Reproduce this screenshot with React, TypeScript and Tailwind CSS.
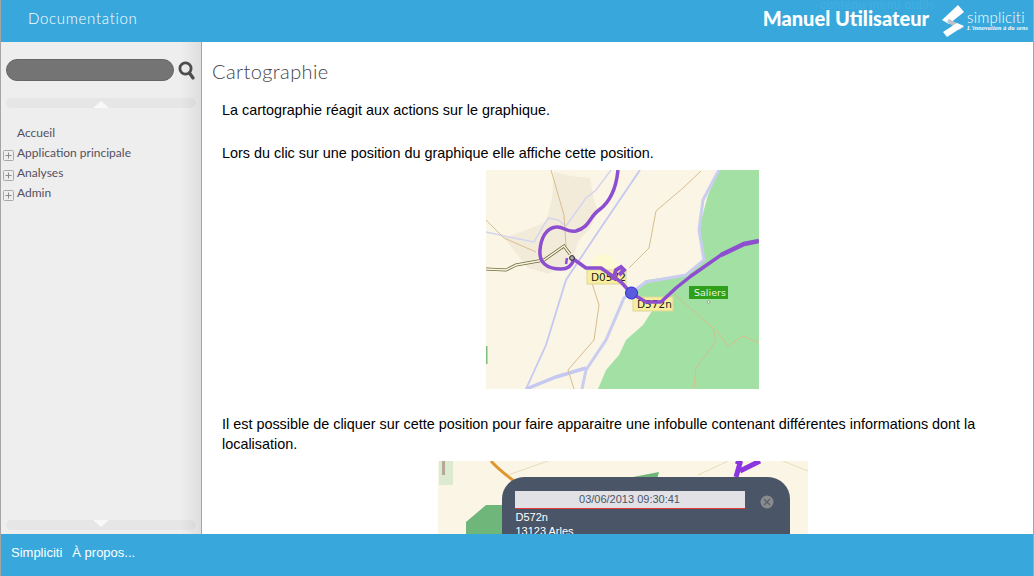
const GREEN = "#a3e0a3";

function PlusBox() {
  return (
    <svg width="11" height="11" viewBox="0 0 11 11" className="shrink-0">
      <rect x="0.5" y="0.5" width="10" height="10" rx="1" fill="#eeeeee" stroke="#a8a8a8" />
      <path d="M2.5 5.5h6M5.5 2.5v6" stroke="#8a8a8a" fill="none" />
    </svg>
  );
}

function TreeItem({ label, expandable }: { label: string; expandable?: boolean }) {
  return (
    <div className="h-5 flex items-center">
      <div className="w-[15px] pl-[1px] pt-[5px] shrink-0">{expandable && <PlusBox />}</div>
      <span className="font-['Lato'] text-[12px] text-[#555060]">{label}</span>
    </div>
  );
}

function ScrollBand({ down }: { down?: boolean }) {
  return (
    <div className="h-[10px] rounded-full bg-black/[0.03] flex justify-center">
      {down ? (
        <div className="w-0 h-0 border-x-[8px] border-x-transparent border-t-[7px] border-t-[#f8f8f8]" />
      ) : (
        <div className="mt-[3px] w-0 h-0 border-x-[8px] border-x-transparent border-b-[7px] border-b-[#f8f8f8]" />
      )}
    </div>
  );
}

function Sidebar() {
  return (
    <aside className="w-[201px] shrink-0 flex flex-col border-r border-[#a5a5a5] bg-gradient-to-r from-[#eeeeee] from-[90%] to-[#dedede] pl-[5px] pr-[5px]">
      <div className="mt-[17px] flex items-center gap-[4px]">
        <div className="w-[168px] h-[22px] rounded-full bg-[#747474] border border-[#666666]" />
        <svg width="17" height="19" viewBox="0 0 17 19">
          <circle cx="7.5" cy="7.5" r="5.6" fill="none" stroke="#4d4d4d" strokeWidth="2.8" />
          <path d="M11.5 12 L15 17" stroke="#4d4d4d" strokeWidth="3.2" strokeLinecap="round" />
        </svg>
      </div>
      <div className="mt-[17px]">
        <ScrollBand />
      </div>
      <div className="mt-[15px] -ml-[4px] flex-1">
        <TreeItem label="Accueil" />
        <TreeItem label="Application principale" expandable />
        <TreeItem label="Analyses" expandable />
        <TreeItem label="Admin" expandable />
      </div>
      <div className="mb-[4px]">
        <ScrollBand down />
      </div>
    </aside>
  );
}

function FirstMap() {
  return (
    <svg width="273" height="219" viewBox="0 0 273 219" className="block">
      <rect width="273" height="219" fill="#fbf5e6" />
      {/* town */}
      <path d="M68 2 L85 6 L104 8 L108 30 L112 42 L104 58 L92 72 L86 92 L62 104 L42 98 L18 68 L35 62 L60 52 L66 28Z" fill="#f3ebda" />
      {/* forest */}
      <path d="M233 0 L222 25 L213 58 L217 91 L200 105 L160 110 L148 120 L166 141 L157 155 L140 170 L133 185 L120 200 L112 219 L273 219 L273 0Z" fill={GREEN} />
      <rect x="0" y="176" width="1.5" height="18" fill="#7dbd7d" />
      {/* rivers */}
      <path d="M0 62 L28 68 L48 72 L62 48 L72 50 L80 56 L100 28 L110 20 L125 0" fill="none" stroke="#d3d5ee" strokeWidth="1.5" />
      <path d="M154 0 L112 62 L80 110 L60 175 L40 219" fill="none" stroke="#c5c8f1" strokeWidth="1.8" />
      <path d="M233 0 L217 30 L213 60 L218 90 L200 105 L160 112 L138 128 L120 170 L100 200 L96 219" fill="none" stroke="#c9cdf0" strokeWidth="3" />
      <path d="M100 198 L70 207 L40 219" fill="none" stroke="#c5c8f1" strokeWidth="3.5" />
      {/* tracks */}
      <path d="M65 0 L78 45 L80 76 M0 50 L18 68 L50 82 M215 1 L197 18 L170 41 L163 78 L143 98 M105 110 L113 135 L108 170 L82 200 L88 219 M187 123 L227 158 L230 171 L210 198 L208 218 M230 160 L242 176 L257 166 L273 173" fill="none" stroke="#d8bd8e" strokeWidth="1" />
      {/* road */}
      <path d="M0 99 L20 100 L30 95 L58 90 L78 76 L84 84" fill="none" stroke="#6f6a3a" strokeWidth="3" />
      <path d="M0 99 L20 100 L30 95 L58 90 L78 76 L84 84" fill="none" stroke="#fbf5e6" strokeWidth="1.4" />
      {/* route */}
      <path d="M132 0 C130 20 124 32 113 40 C103 47 104 57 90 61 C80 63 78 56 70 57 C60 58 55 68 54 80 C53 92 60 99 75 99 C82 99 85 96 88 90" fill="none" stroke="#8d4fd0" strokeWidth="3.5" />
      <path d="M81 88 L80 94" fill="none" stroke="#8d4fd0" strokeWidth="2.5" />
      {/* labels */}
      <circle cx="118" cy="97" r="13" fill="#fdfbc8" opacity="0.7" />
      <rect x="101" y="100" width="39" height="14" fill="#f8ee9e" stroke="#dcd79a" />
      <text x="105" y="111" fontFamily="DejaVu Sans" fontSize="10.5" fill="#222">D0572</text>
      <path d="M127 110 L130 100 L135 97 L138 100 L133 105" fill="none" stroke="#8d4fd0" strokeWidth="4" />
      <rect x="147" y="127" width="40" height="14" fill="#f8ee9e" stroke="#dcd79a" />
      <text x="151" y="138" fontFamily="DejaVu Sans" fontSize="10.5" fill="#222">D572n</text>
      <path d="M86 88 L100 98 L115 98 L135 112 L145 123 L160 132 L175 132 L190 118 L205 106 L235 85 L258 74" fill="none" stroke="#8d4fd0" strokeWidth="3.5" strokeLinejoin="round" />
      <path d="M235 85 L258 74 L273 71" fill="none" stroke="#8d4fd0" strokeWidth="4.5" />
      <circle cx="145.500" cy="123" r="6" fill="#5b5be0" stroke="#2b2bd0" strokeWidth="1" />
      <circle cx="86" cy="88" r="2.400" fill="#a8a8a8" stroke="#222" strokeWidth="1" />
      {/* place name */}
      <rect x="203" y="116" width="39" height="13" fill="#2ea019" />
      <text x="208" y="126" fontFamily="DejaVu Sans" fontSize="9.500" fill="#e8f5e0">Saliers</text>
      <circle cx="222.500" cy="132" r="1.300" fill="#fff" stroke="#666" strokeWidth="0.5" />
    </svg>
  );
}

function SecondMap() {
  return (
    <div className="relative w-[370px] h-[219px] mx-auto">
      <svg width="370" height="219" viewBox="0 0 370 219" className="block">
        <rect width="370" height="219" fill="#fbf5e6" />
        <rect x="1" y="0" width="14" height="24" fill="#dcebd0" />
        <rect x="4" y="0" width="3" height="14" fill="#b5a898" />
        <path d="M53 0 C60 8 68 14 76 20" fill="none" stroke="#e0962f" strokeWidth="3" />
        <path d="M70 14 L110 0 M260 14 L290 0 M345 0 L370 10" fill="none" stroke="#e8dcb8" strokeWidth="1" />
        <path d="M150 18 L195 16 L221 11 L218 22Z" fill="#6fb67a" />
        <path d="M28 61 L48 44 L66 44 L66 75 L28 75Z" fill="#6fb67a" />
        <path d="M298 16 L302 2 L298 0 M302 10 L322 0" fill="none" stroke="#8a35e0" strokeWidth="5" />
      </svg>
      <div className="absolute left-[64px] top-[16px] w-[288px] h-[120px] rounded-[22px] bg-[#4a5568]">
        <div className="absolute left-[13px] top-[14px] w-[230px] h-[18px] bg-[#e2e2e6] border-b border-b-[#e23b3b] text-center text-[11px] leading-[17px] text-[#4a5568] font-['Liberation_Sans']">
          03/06/2013 09:30:41
        </div>
        <svg width="14" height="14" viewBox="0 0 14 14" className="absolute left-[258px] top-[18px]">
          <circle cx="7" cy="7" r="6.500" fill="#8b8b8b" />
          <path d="M4 4 L10 10 M10 4 L4 10" stroke="#5a6272" strokeWidth="1.500" />
        </svg>
        <div className="absolute left-[14px] top-[33px] text-[11px] leading-[14px] text-white font-['Liberation_Sans']">
          <div>D572n</div>
          <div>13123 Arles</div>
        </div>
      </div>
    </div>
  );
}

function Logo() {
  return (
    <div className="flex items-center gap-[2px] mt-[5px]">
      <svg width="24" height="32" viewBox="0 0 24 32">
        <path d="M17 0 L1 15 L8 19 L23 7 Z" fill="#ffffff" />
        <path d="M8 14 L23 22 L18 25 L6 17Z" fill="#b9c4cc" />
        <path d="M23 21 L6 32 L2 27 L16 18Z" fill="#ffffff" />
      </svg>
      <div className="flex flex-col">
        <span className="font-['Lato'] font-light text-[15px] leading-[16px] text-white tracking-[0.2px]">simpliciti</span>
        <span className="font-['Liberation_Serif'] italic font-bold text-[6px] leading-[7px] text-white tracking-[0.2px]">L'innovation à du sens</span>
      </div>
    </div>
  );
}

export default function App() {
  return (
    <div className="w-[1034px] h-[576px] overflow-hidden flex flex-col bg-white border-x border-[#a5a5a5] font-['Liberation_Sans',sans-serif]">
      <header className="relative h-[42px] shrink-0 bg-[#38a8dc] flex items-center -mx-px pl-[28px] pr-[6px] pb-[6px]">
        <span className="font-['Lato'] font-light text-[15px] tracking-[0.7px] text-white">Documentation</span>
        <span className="absolute left-[820px] top-0 text-[12px] leading-[10px] tracking-[0.4px] text-[#44aee0]">contenu menu outils</span>
        <span className="ml-auto mr-[12px] font-['Lato'] font-black text-[20px] leading-[20px] text-white whitespace-nowrap">Manuel Utilisateur</span>
        <Logo />
      </header>
      <div className="flex-1 min-h-0 flex">
        <Sidebar />
        <main className="flex-1 min-w-0 overflow-hidden">
          <h1 className="mt-[16px] ml-[10px] font-['Lato'] font-light text-[20px] leading-[26px] tracking-[0.4px] text-[#444444]">Cartographie</h1>
          <div className="mt-[16px] pl-[20px] pr-[10px] text-[14.4px] leading-[20px] text-black">
            <p>La cartographie réagit aux actions sur le graphique.</p>
            <p className="mt-[23px]">Lors du clic sur une position du graphique elle affiche cette position.</p>
            <div className="mt-[7px] flex justify-center">
              <FirstMap />
            </div>
            <p className="mt-[25px]">Il est possible de cliquer sur cette position pour faire apparaitre une infobulle contenant différentes informations dont la localisation.</p>
            <div className="mt-[7px]">
              <SecondMap />
            </div>
          </div>
        </main>
      </div>
      <footer className="h-[42px] shrink-0 bg-[#38a8dc] -mx-px pl-[11px] pb-[4px] flex items-center gap-[10px] text-[13px] text-white">
        <span>Simpliciti</span>
        <span>À propos...</span>
      </footer>
    </div>
  );
}
